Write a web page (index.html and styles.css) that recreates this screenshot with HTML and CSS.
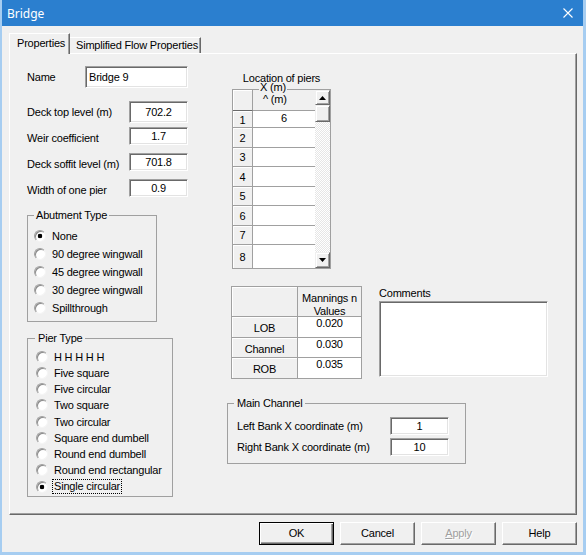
FILE: index.html
```html
<!DOCTYPE html>
<html lang="en">
<head>
    <meta charset="UTF-8">
    <title>Bridge</title>
    <link rel="stylesheet" href="styles.css">
</head>
<body>
    <div class="window">
        <div class="titlebar">
            <span class="title">Bridge</span>
            <svg class="close" width="10" height="10" viewBox="0 0 10 10"><path d="M0.5 0.5L9.5 9.5M9.5 0.5L0.5 9.5" stroke="#fff" stroke-width="1.1" fill="none"/></svg>
        </div>

        <div class="client">
            <div class="tabs">
                <div class="tab tab-active">Properties</div>
                <div class="tab">Simplified Flow Properties</div>
            </div>

            <div class="panel">
                <!-- Left column: names, levels and radio groups -->
                <div class="col-left">
                    <div class="name-row">
                        <span class="name-label">Name</span>
                        <input class="textbox name-box" value="Bridge 9">
                    </div>

                    <div class="levels">
                        <div class="level-row">
                            <span class="level-label">Deck top level (m)</span>
                            <input class="textbox num-box tall" value="702.2">
                        </div>
                        <div class="level-row">
                            <span class="level-label">Weir coefficient</span>
                            <input class="textbox num-box" value="1.7">
                        </div>
                        <div class="level-row">
                            <span class="level-label">Deck soffit level (m)</span>
                            <input class="textbox num-box" value="701.8">
                        </div>
                        <div class="level-row">
                            <span class="level-label">Width of one pier</span>
                            <input class="textbox num-box" value="0.9">
                        </div>
                    </div>

                    <fieldset class="group abutment">
                        <legend>Abutment Type</legend>
                        <div class="radio-list">
                            <div class="radio-row"><span class="radio checked"></span>None</div>
                            <div class="radio-row"><span class="radio"></span>90 degree wingwall</div>
                            <div class="radio-row"><span class="radio"></span>45 degree wingwall</div>
                            <div class="radio-row"><span class="radio"></span>30 degree wingwall</div>
                            <div class="radio-row"><span class="radio"></span>Spillthrough</div>
                        </div>
                    </fieldset>

                    <fieldset class="group pier">
                        <legend>Pier Type</legend>
                        <div class="radio-list">
                            <div class="radio-row"><span class="radio"></span>H H H H H</div>
                            <div class="radio-row"><span class="radio"></span>Five square</div>
                            <div class="radio-row"><span class="radio"></span>Five circular</div>
                            <div class="radio-row"><span class="radio"></span>Two square</div>
                            <div class="radio-row"><span class="radio"></span>Two circular</div>
                            <div class="radio-row"><span class="radio"></span>Square end dumbell</div>
                            <div class="radio-row"><span class="radio"></span>Round end dumbell</div>
                            <div class="radio-row"><span class="radio"></span>Round end rectangular</div>
                            <div class="radio-row"><span class="radio checked"></span><span class="focused">Single circular</span></div>
                        </div>
                    </fieldset>
                </div>

                <!-- Right column: pier grid, mannings, comments, main channel -->
                <div class="col-right">
                    <div class="piers">
                        <div class="piers-title">Location of piers</div>
                        <div class="grid">
                            <div class="grid-table">
                                <div class="grid-head">
                                    <div class="corner"></div>
                                    <div class="colhead">
                                        <span class="colhead-top">X (m)</span>
                                        <span class="colhead-sub">^ (m)</span>
                                    </div>
                                </div>
                                <div class="grid-row first"><div class="rowhead">1</div><div class="cell">6</div></div>
                                <div class="grid-row"><div class="rowhead">2</div><div class="cell"></div></div>
                                <div class="grid-row"><div class="rowhead">3</div><div class="cell"></div></div>
                                <div class="grid-row"><div class="rowhead">4</div><div class="cell"></div></div>
                                <div class="grid-row"><div class="rowhead">5</div><div class="cell"></div></div>
                                <div class="grid-row"><div class="rowhead">6</div><div class="cell"></div></div>
                                <div class="grid-row"><div class="rowhead">7</div><div class="cell"></div></div>
                                <div class="grid-row last"><div class="rowhead">8</div><div class="cell"></div></div>
                            </div>
                            <div class="vscroll">
                                <div class="sb-btn sb-up"><svg width="7" height="4" viewBox="0 0 7 4"><path d="M3.5 0L7 4H0Z" fill="#000"/></svg></div>
                                <div class="sb-thumb"></div>
                                <div class="sb-track"></div>
                                <div class="sb-btn sb-down"><svg width="7" height="4" viewBox="0 0 7 4"><path d="M0 0H7L3.5 4Z" fill="#000"/></svg></div>
                            </div>
                        </div>
                    </div>

                    <div class="mann-row">
                        <div class="mannings">
                            <div class="m-row m-head">
                                <div class="m-label"></div>
                                <div class="m-val">Mannings n<br>Values</div>
                            </div>
                            <div class="m-row r1">
                                <div class="m-label">LOB</div>
                                <div class="m-val">0.020</div>
                            </div>
                            <div class="m-row r2">
                                <div class="m-label">Channel</div>
                                <div class="m-val">0.030</div>
                            </div>
                            <div class="m-row r3">
                                <div class="m-label">ROB</div>
                                <div class="m-val">0.035</div>
                            </div>
                        </div>

                        <div class="comments">
                            <div class="comments-label">Comments</div>
                            <div class="comments-box"></div>
                        </div>
                    </div>

                    <fieldset class="group main-channel">
                        <legend>Main Channel</legend>
                        <div class="mc-list">
                            <div class="mc-row">
                                <span class="mc-label">Left Bank X coordinate (m)</span>
                                <input class="textbox mc-box" value="1">
                            </div>
                            <div class="mc-row">
                                <span class="mc-label">Right Bank X coordinate (m)</span>
                                <input class="textbox mc-box" value="10">
                            </div>
                        </div>
                    </fieldset>
                </div>
            </div>

            <div class="buttons">
                <div class="btn btn-default">OK</div>
                <div class="btn">Cancel</div>
                <div class="btn btn-disabled"><u>A</u>pply</div>
                <div class="btn">Help</div>
            </div>
        </div>
    </div>
</body>
</html>
```

FILE: styles.css
```css
/* Classic Windows dialog look */
body {
    margin: 0;
    font-family: "Liberation Sans", Arial, sans-serif;
    font-size: 11px;
    letter-spacing: -0.2px;
    color: #000;
}

.window {
    width: 586px;
    height: 555px;
    box-sizing: border-box;
    border-left: 2px solid #a6cdf1;
    border-right: 3px solid #a6cdf1;
    border-bottom: 3px solid #a6cdf1;
    background: #f0f0f0;
    display: flex;
    flex-direction: column;
}

.titlebar {
    height: 26px;
    flex: none;
    background: #2b7fcf;
    color: #fff;
    display: flex;
    align-items: center;
    justify-content: space-between;
    padding: 0 10px 0 5px;
}

.title {
    font-family: "Noto Sans", "Liberation Sans", sans-serif;
    font-size: 12px;
    letter-spacing: 0;
}

.close {
    display: block;
}

.client {
    flex: 1;
    padding: 7px 0 0 7px;
}

/* Tabs */
.tabs {
    display: flex;
    align-items: flex-end;
    height: 20px;
}

.tab {
    box-sizing: border-box;
    height: 16px;
    line-height: 15px;
    width: 131px;
    padding-left: 6px;
    border-top: 1px solid #fff;
    border-right: 1px solid #696969;
    box-shadow: inset -1px 0 0 #a0a0a0;
    white-space: nowrap;
}

.tab-active {
    position: relative;
    z-index: 1;
    width: 61px;
    height: 21px;
    line-height: 19px;
    margin-bottom: -1px;
    padding-left: 7px;
    border-left: 1px solid #fff;
    background: #f0f0f0;
}

/* Tab page */
.panel {
    width: 568px;
    height: 462px;
    box-sizing: border-box;
    border: 1px solid;
    border-color: #fff #696969 #696969 #fff;
    box-shadow: inset -1px -1px 0 #a0a0a0;
    padding: 12px 0 0 17px;
    display: grid;
    grid-template-columns: 161px 1fr;
    column-gap: 39px;
    align-items: start;
}

.textbox {
    box-sizing: border-box;
    margin: 0;
    padding: 0 3px;
    font: inherit;
    letter-spacing: inherit;
    color: #000;
    background: #fff;
    border: 1px solid;
    border-color: #a0a0a0 #fff #fff #a0a0a0;
    box-shadow: inset 1px 1px 0 #696969, inset -1px -1px 0 #e3e3e3;
    outline: none;
}

.name-row {
    display: flex;
    align-items: center;
    height: 22px;
}

.name-label {
    width: 58px;
}

.name-box {
    width: 103px;
    height: 22px;
}

.levels {
    margin-top: 13px;
    display: flex;
    flex-direction: column;
    gap: 4px;
}

.level-row {
    display: flex;
    align-items: flex-start;
    height: 22px;
}

.level-label {
    width: 102px;
    line-height: 22px;
    white-space: nowrap;
}

.num-box {
    width: 59px;
    height: 18px;
    text-align: center;
}

.num-box.tall {
    height: 22px;
}

/* Group boxes */
.group {
    margin: 0;
    padding: 0;
    min-width: 0;
    border: 1px solid #a0a0a0;
}

.group legend {
    font-size: 11px;
    line-height: 13px;
    padding: 0 2px;
    margin-left: 6px;
}

.abutment {
    width: 130px;
    box-sizing: border-box;
    margin-top: 8px;
}

.abutment .radio-list {
    padding: 5px 0 4px 6px;
}

.abutment .radio-row {
    height: 18px;
}

.pier {
    width: 146px;
    box-sizing: border-box;
    margin-top: 10px;
}

.pier legend {
    margin-left: 7px;
    padding: 0 3px;
}

.pier .radio-list {
    padding: 3.5px 0 1px 8px;
}

.pier .radio-row {
    height: 16.25px;
}

.radio-row {
    display: flex;
    align-items: center;
    gap: 6px;
    white-space: nowrap;
}

.radio {
    width: 12px;
    height: 12px;
    box-sizing: border-box;
    flex: none;
    border-radius: 50%;
    border: 1px solid;
    border-color: #a0a0a0 #f4f4f4 #f4f4f4 #a0a0a0;
    box-shadow: inset 1px 1px 0 #8a8a8a;
    background: #fff;
}

.radio.checked {
    background: radial-gradient(circle, #000 0 2px, #fff 2.6px);
}

.focused {
    outline: 1px dotted #000;
    line-height: 13px;
    margin-left: -1px;
    padding: 0 1px;
}

/* Location of piers grid */
.piers {
    margin-left: 5px;
    width: 99px;
}

.piers-title {
    text-align: center;
    line-height: 12px;
    margin-top: 6px;
    margin-bottom: 5px;
}

.grid {
    display: flex;
    height: 180px;
    box-sizing: border-box;
    border: 1px solid #a0a0a0;
}

.grid-table {
    width: 82px;
    display: flex;
    flex-direction: column;
}

.grid-head {
    display: flex;
    height: 21px;
    flex: none;
}

.corner {
    width: 20px;
    box-sizing: border-box;
    background: #f0f0f0;
    border-right: 1px solid #a0a0a0;
    border-bottom: 1px solid #696969;
    box-shadow: inset 1px 1px 0 #fff;
}

.colhead {
    width: 62px;
    box-sizing: border-box;
    background: #f0f0f0;
    border-bottom: 1px solid #a0a0a0;
}

.colhead-top {
    display: block;
    width: max-content;
    margin: -8px 0 0 6px;
    padding: 0 1px;
    line-height: 10px;
    background: #f0f0f0;
}

.colhead-sub {
    display: block;
    margin: 2px 0 0 10px;
    line-height: 11px;
}

.grid-row {
    display: flex;
    height: 19.5px;
    flex: none;
}

.grid-row.first {
    height: 17px;
}

.grid-row.last {
    flex: 1;
}

.rowhead {
    width: 20px;
    box-sizing: border-box;
    background: #f0f0f0;
    border-right: 1px solid #a0a0a0;
    border-bottom: 1px solid #a0a0a0;
    box-shadow: inset 1px 1px 0 #fff;
    display: flex;
    align-items: center;
    justify-content: center;
    padding-top: 1px;
}

.cell {
    width: 62px;
    box-sizing: border-box;
    background: #fff;
    border-bottom: 1px solid #a0a0a0;
    text-align: center;
    line-height: 13px;
    padding-top: 1px;
}

.grid-row.last .cell,
.grid-row.last .rowhead {
    border-bottom: none;
}

.vscroll {
    width: 15px;
    display: flex;
    flex-direction: column;
}

.sb-btn,
.sb-thumb {
    box-sizing: border-box;
    background: #f0f0f0;
    border: 1px solid;
    border-color: #f0f0f0 #696969 #696969 #f0f0f0;
    box-shadow: inset 1px 1px 0 #fff, inset -1px -1px 0 #a0a0a0;
}

.sb-btn {
    height: 15px;
    display: flex;
    align-items: center;
    justify-content: center;
}

.sb-btn svg {
    display: block;
}

.sb-down {
    height: 16px;
}

.sb-thumb {
    height: 17px;
}

.sb-track {
    flex: 1;
    background: repeating-conic-gradient(#fff 0 25%, #e6e6e6 0 50%) 0 0 / 2px 2px;
}

/* Mannings table and comments */
.mann-row {
    display: flex;
    align-items: flex-start;
    margin-top: 17px;
}

.mannings {
    margin-left: 4px;
    width: 131px;
    height: 93px;
    box-sizing: border-box;
    border: 1px solid #a0a0a0;
}

.m-row {
    display: flex;
    height: 20px;
}

.m-head {
    height: 30px;
}

.m-row.r1 {
    height: 21px;
}

.m-label {
    width: 66px;
    box-sizing: border-box;
    background: #f0f0f0;
    border-right: 1px solid #a0a0a0;
    border-bottom: 1px solid #a0a0a0;
    box-shadow: inset 1px 1px 0 #fff;
    text-align: center;
    line-height: 13px;
    padding-top: 5px;
}

.m-val {
    flex: 1;
    box-sizing: border-box;
    background: #fff;
    border-bottom: 1px solid #a0a0a0;
    text-align: center;
    line-height: 13px;
}

.m-head .m-val {
    background: #f0f0f0;
    line-height: 12.5px;
    padding-top: 5px;
}

.r3 .m-label,
.r3 .m-val {
    border-bottom: none;
}

.comments {
    margin-left: 17px;
}

.comments-label {
    line-height: 13px;
    margin-top: 1px;
}

.comments-box {
    margin-top: 1px;
    width: 169px;
    height: 76px;
    box-sizing: border-box;
    background: #fff;
    border: 1px solid;
    border-color: #a0a0a0 #fff #fff #a0a0a0;
    box-shadow: inset 1px 1px 0 #696969, inset -1px -1px 0 #e3e3e3;
}

/* Main channel group */
.main-channel {
    width: 239px;
    box-sizing: border-box;
    margin-top: 18px;
}

.main-channel legend {
    padding: 0 3px;
}

.mc-list {
    padding: 6.5px 0 7px 9px;
    display: flex;
    flex-direction: column;
    gap: 3px;
}

.mc-row {
    display: flex;
    align-items: center;
    height: 18px;
}

.mc-label {
    width: 153px;
}

.mc-box {
    width: 59px;
    height: 18px;
    text-align: center;
}

/* Dialog buttons */
.buttons {
    width: 568px;
    margin-top: 7px;
    display: flex;
    justify-content: flex-end;
    gap: 6px;
}

.btn {
    width: 75px;
    height: 23px;
    box-sizing: border-box;
    background: #f0f0f0;
    border: 1px solid;
    border-color: #fff #696969 #696969 #fff;
    box-shadow: inset -1px -1px 0 #a0a0a0;
    text-align: center;
    line-height: 21px;
}

.btn-default {
    border-color: #000;
    box-shadow: inset 1px 1px 0 #fff, inset -1px -1px 0 #696969, inset -2px -2px 0 #a0a0a0;
}

.btn-disabled {
    color: #a0a0a0;
    text-shadow: 1px 1px 0 #fff;
}
```
